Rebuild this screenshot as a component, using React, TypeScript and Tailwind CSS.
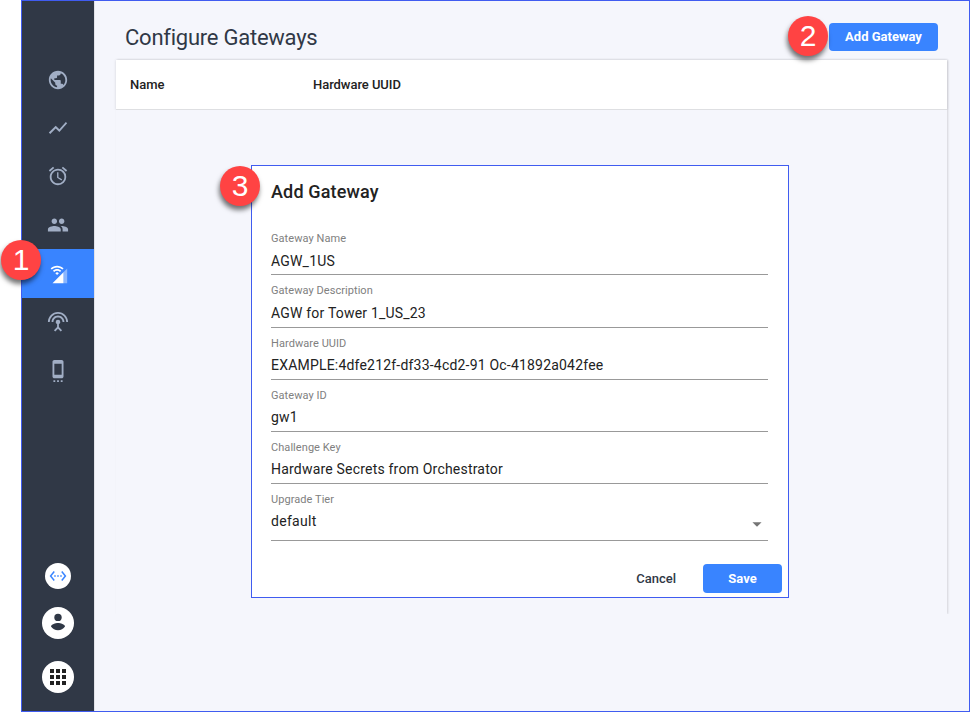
import type { ReactNode } from 'react';
import {
  MdPublic,
  MdShowChart,
  MdAccessAlarm,
  MdPeople,
  MdSettingsInputAntenna,
  MdSettingsCell,
  MdSettingsEthernet,
  MdApps,
  MdArrowDropDown,
} from 'react-icons/md';

function CellWifiIcon() {
  return (
    <svg viewBox="0 0 24 24" width="22" height="22" fill="currentColor">
      <path d="M18 9.98 6 22h12z" />
      <path d="M18 9.98V22h4V5.98z" fillOpacity=".4" />
      <path d="M3.93 5.93l1.29 1.29c3.19-3.19 8.38-3.19 11.57 0l1.29-1.29c-3.91-3.91-10.25-3.91-14.15 0zm5.14 5.14L11 13l1.93-1.93a2.73 2.73 0 0 0-3.86 0zM6.5 8.5l1.29 1.29a4.54 4.54 0 0 1 6.43 0l1.29-1.29c-2.48-2.49-6.52-2.49-9.01 0z" />
    </svg>
  );
}

function PersonIcon() {
  return (
    <svg viewBox="0 0 32 32" width="32" height="32" fill="#303846">
      <circle cx="16" cy="10.4" r="3.7" />
      <path d="M16 23.2c-2.9 0-5.5-1.5-7-3.7.03-2.3 4.6-3.5 7-3.5s6.97 1.2 7 3.5c-1.5 2.2-4.1 3.7-7 3.7z" />
    </svg>
  );
}

function NavItem({ children, active = false }: { children: ReactNode; active?: boolean }) {
  return (
    <a
      className={
        active
          ? 'flex h-[49px] items-center justify-center bg-[#3984ff] text-white'
          : 'flex h-[48.6px] items-center justify-center text-[#a1aec5]'
      }
    >
      {children}
    </a>
  );
}

function Field({ label, value }: { label: string; value: string }) {
  return (
    <div className="flex h-[52.2px] flex-col">
      <label className="h-4 text-[11px] leading-4 tracking-[0.06px] text-[#808080]">{label}</label>
      <div className="mt-[3.4px] h-[24.8px] border-b border-[#999] text-[14px] leading-5 tracking-[0.2px] text-[#222]">
        {value}
      </div>
    </div>
  );
}

function Badge({ children, place }: { children: ReactNode; place: string }) {
  return (
    <div
      className={`absolute z-20 flex size-10 items-center justify-center rounded-full bg-[#ff4343] font-['Liberation_Sans',sans-serif] text-[30px] leading-none text-white shadow-[-1px_4px_5px_rgba(0,0,0,0.55)] ${place}`}
    >
      {children}
    </div>
  );
}

export default function App() {
  return (
    <div className="relative h-[712px] w-[970px] overflow-hidden bg-white pl-[21px] font-[Roboto,sans-serif]">
      <div className="flex h-full border border-[#405cf0] bg-[#f5f6fc]">
        <nav className="flex w-[72px] shrink-0 flex-col bg-[#303846] pt-[54px]">
          <NavItem><MdPublic size={22} className="mt-px" /></NavItem>
          <NavItem><MdShowChart size={22} /></NavItem>
          <NavItem><MdAccessAlarm size={22} /></NavItem>
          <NavItem><MdPeople size={22} /></NavItem>
          <NavItem active><CellWifiIcon /></NavItem>
          <NavItem><MdSettingsInputAntenna size={22} className="mb-[2px]" /></NavItem>
          <NavItem><MdSettingsCell size={22} /></NavItem>
          <div className="mt-auto flex flex-col items-center pb-[18px]">
            <div className="flex size-[26px] items-center justify-center rounded-full bg-white text-[#3984ff]">
              <MdSettingsEthernet size={18} />
            </div>
            <div className="mt-[18px] size-8 rounded-full bg-white"><PersonIcon /></div>
            <div className="mt-[22px] flex size-8 items-center justify-center rounded-full bg-white text-[#222]">
              <MdApps size={24} />
            </div>
          </div>
        </nav>

        <main className="flex grow flex-col border-l border-[#e1e2e8] pr-[22px] pl-[21px]">
          <header className="flex h-[59px] items-center justify-between pt-[13px] pr-[9px] pl-[9px]">
            <h1 className="pt-[2px] text-[22px] leading-7 tracking-[-0.24px] text-[#303846]">Configure Gateways</h1>
            <button className="h-7 w-[109px] rounded-[4px] bg-[#3984ff] text-[13px] font-bold text-white">
              Add Gateway
            </button>
          </header>
          <section className="h-[554px] shadow-[1px_0_2px_rgba(0,0,0,0.14)] [clip-path:inset(-2px_-4px_0_-3px)]">
            <div className="flex h-[50px] items-center border-b border-[#dedfe2] bg-white pl-[14px] text-[13px] font-medium tracking-[-0.05px] text-[#222] shadow-[0_0_3px_rgba(0,0,0,0.12)] [clip-path:inset(-3px_-3px_0_-3px)]">
              <span className="w-[183px]">Name</span>
              <span>Hardware UUID</span>
            </div>
          </section>
        </main>
      </div>

      <div className="absolute top-[165px] left-[251px] z-10 h-[433px] w-[538px] border border-[#405cf0] bg-white pt-[14px] pl-[19px]">
        <h2 className="h-[51.3px] text-[18px] leading-6 font-medium tracking-[0.15px] text-[#222]">Add Gateway</h2>
        <div className="flex w-[497px] flex-col">
          <Field label="Gateway Name" value="AGW_1US" />
          <Field label="Gateway Description" value="AGW for Tower 1_US_23" />
          <Field label="Hardware UUID" value="EXAMPLE:4dfe212f-df33-4cd2-91 Oc-41892a042fee" />
          <Field label="Gateway ID" value="gw1" />
          <Field label="Challenge Key" value="Hardware Secrets from Orchestrator" />
          <div className="h-[48.7px] border-b border-[#999]">
            <label className="block h-4 text-[11px] leading-4 tracking-[0.06px] text-[#808080]">Upgrade Tier</label>
            <div className="mt-[3px] flex justify-between text-[14px] leading-5 tracking-[0.3px] text-[#222]">
              <span>default</span>
              <MdArrowDropDown size={22} className="mt-[2px] text-[#757575]" />
            </div>
          </div>
        </div>
        <div className="mt-[23px] flex items-center justify-end gap-[27px] pr-[6px] text-[13px]">
          <button className="font-medium text-[#303846]">Cancel</button>
          <button className="h-[29px] w-[79px] rounded-[4px] bg-[#3984ff] font-bold text-white">Save</button>
        </div>
      </div>

      <Badge place="left-[1px] top-[240px]">1</Badge>
      <Badge place="left-[788px] top-[16px]">2</Badge>
      <Badge place="left-[220px] top-[166px]">3</Badge>
    </div>
  );
}
